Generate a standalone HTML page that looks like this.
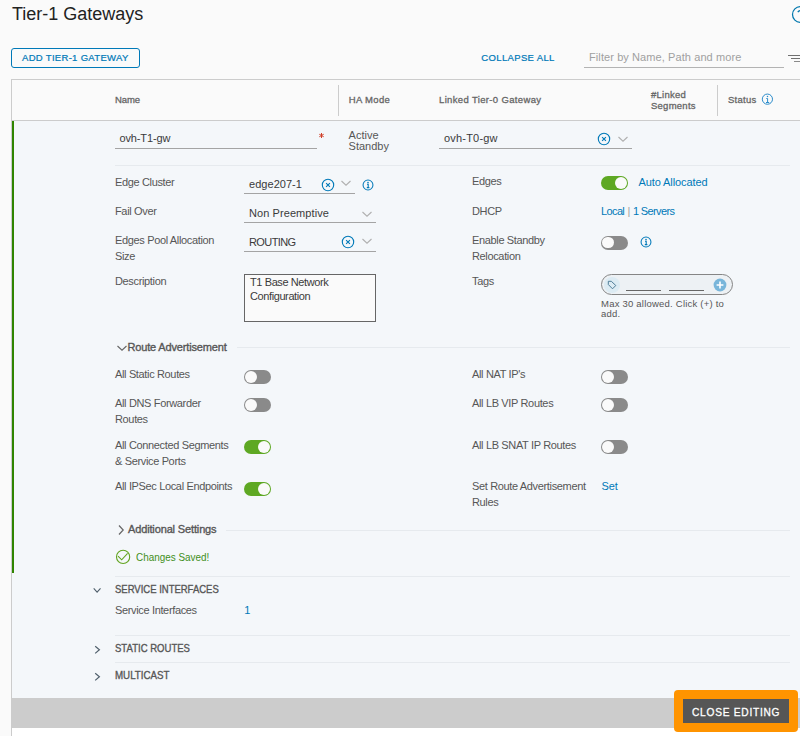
<!DOCTYPE html>
<html><head><meta charset="utf-8"><style>
html,body{margin:0;padding:0;}
body{width:800px;height:736px;overflow:hidden;position:relative;background:#fafafa;font-family:"Liberation Sans",sans-serif;}
.t{position:absolute;white-space:nowrap;}
.r{position:absolute;}
</style></head><body>
<div class="t" style="left:12px;top:4.76px;font-size:18px;line-height:18px;color:#222;font-weight:400;letter-spacing:0px;">Tier-1 Gateways</div>
<svg class="r" style="left:790px;top:4px" width="10" height="22" viewBox="0 0 10 22"><circle cx="10.5" cy="10.5" r="8" fill="none" stroke="#0077ad" stroke-width="1.25"/><path d="M7.8 8.2 Q9 6.2 11 6.6" fill="none" stroke="#0077ad" stroke-width="1.3"/></svg>
<div class="r" style="left:11px;top:48px;width:129px;height:20px;border:1px solid #0079b8;border-radius:3px;box-sizing:border-box"></div>
<div class="t" style="left:22px;top:52.66px;font-size:9.5px;line-height:9.5px;color:#0079b8;font-weight:400;letter-spacing:0.31px;-webkit-text-stroke:0.22px #0079b8;">ADD TIER-1 GATEWAY</div>
<div class="t" style="left:481.3px;top:53.16px;font-size:9.5px;line-height:9.5px;color:#0079b8;font-weight:400;letter-spacing:0.35px;-webkit-text-stroke:0.22px #0079b8;">COLLAPSE ALL</div>
<div class="r" style="left:584px;top:67px;width:200px;height:1px;background:#b3b3b3"></div>
<div class="t" style="left:589px;top:52.49px;font-size:11px;line-height:11px;color:#a0a0a0;font-weight:400;letter-spacing:0.09px;">Filter by Name, Path and more</div>
<div class="r" style="left:788px;top:55px;width:12px;height:1px;background:#707070"></div>
<div class="r" style="left:791px;top:58px;width:9px;height:1px;background:#707070"></div>
<div class="r" style="left:793.5px;top:61px;width:6px;height:1px;background:#8a8a8a"></div>
<div class="r" style="left:11px;top:79px;width:800px;height:660px;border:1px solid #cccccc;box-sizing:border-box;background:#fafafa"></div>
<div class="r" style="left:12px;top:120px;width:788px;height:1px;background:#cccccc"></div>
<div class="r" style="left:338px;top:85px;width:1px;height:31px;background:#cccccc"></div>
<div class="r" style="left:717px;top:85px;width:1px;height:31px;background:#cccccc"></div>
<div class="t" style="left:115px;top:95.36px;font-size:9.5px;line-height:9.5px;color:#666666;font-weight:400;letter-spacing:-0.1px;-webkit-text-stroke:0.3px #666666;">Name</div>
<div class="t" style="left:348.7px;top:95.36px;font-size:9.5px;line-height:9.5px;color:#666666;font-weight:400;letter-spacing:0.35px;-webkit-text-stroke:0.3px #666666;">HA Mode</div>
<div class="t" style="left:439px;top:95.36px;font-size:9.5px;line-height:9.5px;color:#666666;font-weight:400;letter-spacing:0.35px;-webkit-text-stroke:0.3px #666666;">Linked Tier-0 Gateway</div>
<div class="t" style="left:651px;top:88.61px;font-size:9.5px;line-height:11px;color:#666666;font-weight:400;letter-spacing:0.25px;-webkit-text-stroke:0.3px #666666;">#Linked<br>Segments</div>
<div class="t" style="left:728px;top:95.36px;font-size:9.5px;line-height:9.5px;color:#666666;font-weight:400;letter-spacing:0.25px;-webkit-text-stroke:0.3px #666666;">Status</div>
<svg class="r" style="left:761px;top:93px" width="13" height="13" viewBox="0 0 13 13"><circle cx="6.4" cy="6.15" r="5.1" fill="none" stroke="#2b8ccb" stroke-width="1"/><circle cx="6.5" cy="3.5" r="0.75" fill="#2b8ccb"/><path d="M5.3 5.5H6.6V9.5M5 9.5H8.2" fill="none" stroke="#2b8ccb" stroke-width="1"/></svg>
<div class="r" style="left:12px;top:121px;width:788px;height:577px;background:#f4f7fa"></div>
<div class="r" style="left:12px;top:121px;width:2px;height:452px;background:#2f8400"></div>
<div class="t" style="left:119.5px;top:133.29px;font-size:11px;line-height:11px;color:#3a3a3a;font-weight:400;letter-spacing:-0.14px;">ovh-T1-gw</div>
<div class="r" style="left:115px;top:148px;width:202px;height:1px;background:#a4a4a4"></div>
<svg class="r" style="left:316px;top:130px" width="11" height="11" viewBox="0 0 11 11"><path d="M5.5 3V8M3.3 4.25L7.7 6.75M3.3 6.75L7.7 4.25" stroke="#d0402a" stroke-width="1"/></svg>
<div class="t" style="left:348.6px;top:129.69px;font-size:11px;line-height:11px;color:#565656;font-weight:400;letter-spacing:0px;">Active<br>Standby</div>
<div class="t" style="left:444px;top:133.29px;font-size:11px;line-height:11px;color:#3a3a3a;font-weight:400;letter-spacing:0.2px;">ovh-T0-gw</div>
<div class="r" style="left:439px;top:148px;width:193px;height:1px;background:#a4a4a4"></div>
<div class="r" style="left:115px;top:165px;width:675px;height:1px;background:#e6eaee"></div>
<svg class="r" style="left:597.45px;top:132.35px" width="14" height="14" viewBox="0 0 14 14"><circle cx="7" cy="7" r="5.7" fill="none" stroke="#0079b8" stroke-width="1.1"/><path d="M5.1 5.1L8.9 8.9M8.9 5.1L5.1 8.9" stroke="#0079b8" stroke-width="1.1"/></svg>
<svg class="r" style="left:616.6px;top:135px" width="12" height="8" viewBox="0 0 12 8"><path d="M1.5 2 L6 6.2 L10.5 2" fill="none" stroke="#b0b0b0" stroke-width="1.1"/></svg>
<div class="t" style="left:115px;top:176.69px;font-size:11px;line-height:11px;color:#565656;font-weight:400;letter-spacing:-0.35px;">Edge Cluster</div>
<div class="t" style="left:115px;top:205.69px;font-size:11px;line-height:11px;color:#565656;font-weight:400;letter-spacing:-0.35px;">Fail Over</div>
<div class="t" style="left:115px;top:232.49px;font-size:11px;line-height:16px;color:#565656;font-weight:400;letter-spacing:-0.35px;">Edges Pool Allocation<br>Size</div>
<div class="t" style="left:115px;top:275.69px;font-size:11px;line-height:11px;color:#565656;font-weight:400;letter-spacing:-0.35px;">Description</div>
<div class="t" style="left:249px;top:179.19px;font-size:11px;line-height:11px;color:#3a3a3a;font-weight:400;letter-spacing:0.04px;">edge207-1</div>
<div class="r" style="left:244px;top:193px;width:111px;height:1px;background:#a4a4a4"></div>
<svg class="r" style="left:321px;top:177.5px" width="14" height="14" viewBox="0 0 14 14"><circle cx="7" cy="7" r="5.7" fill="none" stroke="#0079b8" stroke-width="1.1"/><path d="M5.1 5.1L8.9 8.9M8.9 5.1L5.1 8.9" stroke="#0079b8" stroke-width="1.1"/></svg>
<svg class="r" style="left:339.7px;top:179.4px" width="12" height="8" viewBox="0 0 12 8"><path d="M1.5 2 L6 6.2 L10.5 2" fill="none" stroke="#b0b0b0" stroke-width="1.1"/></svg>
<svg class="r" style="left:360.7px;top:177.5px" width="14" height="14" viewBox="0 0 14 14"><circle cx="7" cy="7" r="4.95" fill="none" stroke="#0079b8" stroke-width="1.05"/><circle cx="7" cy="4.6" r="0.8" fill="#0079b8"/><path d="M6 6.3H7.2V9.6M5.8 9.6H8.4" fill="none" stroke="#0079b8" stroke-width="1.1"/></svg>
<div class="t" style="left:249px;top:208.19px;font-size:11px;line-height:11px;color:#3a3a3a;font-weight:400;letter-spacing:0.08px;">Non Preemptive</div>
<div class="r" style="left:244px;top:222px;width:132px;height:1px;background:#a4a4a4"></div>
<svg class="r" style="left:361px;top:209.6px" width="12" height="8" viewBox="0 0 12 8"><path d="M1.5 2 L6 6.2 L10.5 2" fill="none" stroke="#b0b0b0" stroke-width="1.1"/></svg>
<div class="t" style="left:249px;top:236.89px;font-size:11px;line-height:11px;color:#3a3a3a;font-weight:400;letter-spacing:-0.6px;">ROUTING</div>
<div class="r" style="left:244px;top:251px;width:132px;height:1px;background:#a4a4a4"></div>
<svg class="r" style="left:341.4px;top:235.4px" width="14" height="14" viewBox="0 0 14 14"><circle cx="7" cy="7" r="5.7" fill="none" stroke="#0079b8" stroke-width="1.1"/><path d="M5.1 5.1L8.9 8.9M8.9 5.1L5.1 8.9" stroke="#0079b8" stroke-width="1.1"/></svg>
<svg class="r" style="left:361px;top:237px" width="12" height="8" viewBox="0 0 12 8"><path d="M1.5 2 L6 6.2 L10.5 2" fill="none" stroke="#b0b0b0" stroke-width="1.1"/></svg>
<div class="r" style="left:244px;top:274px;width:132px;height:48px;border:1px solid #666;box-sizing:border-box;background:#fafafa"></div>
<div class="t" style="left:250px;top:274.99px;font-size:11px;line-height:14px;color:#3a3a3a;font-weight:400;letter-spacing:-0.4px;">T1 Base Network<br>Configuration</div>
<div class="t" style="left:472px;top:176.19px;font-size:11px;line-height:11px;color:#565656;font-weight:400;letter-spacing:-0.35px;">Edges</div>
<div class="r" style="left:601px;top:176px;width:27px;height:14px;background:#5ea823;border-radius:7px"></div>
<div class="r" style="left:615.25px;top:177.25px;width:11.5px;height:11.5px;background:#fafafa;border-radius:6px"></div>
<div class="t" style="left:638.5px;top:177.19px;font-size:11px;line-height:11px;color:#0079b8;font-weight:400;letter-spacing:-0.1px;">Auto Allocated</div>
<div class="t" style="left:472px;top:205.94px;font-size:11px;line-height:11px;color:#565656;font-weight:400;letter-spacing:-0.35px;">DHCP</div>
<div class="t" style="left:601px;top:206.19px;font-size:11px;line-height:11px;color:#0079b8;font-weight:400;letter-spacing:-0.62px;">Local<span style="color:#a0a0a0;margin:0 0.8px"> | </span>1 Servers</div>
<div class="t" style="left:472px;top:232.49px;font-size:11px;line-height:16px;color:#565656;font-weight:400;letter-spacing:-0.35px;">Enable Standby<br>Relocation</div>
<div class="r" style="left:601px;top:235.5px;width:27px;height:14px;background:#8a8a8a;border-radius:7px"></div>
<div class="r" style="left:602.25px;top:236.75px;width:11.5px;height:11.5px;background:#fafafa;border-radius:6px"></div>
<svg class="r" style="left:638.5px;top:235px" width="14" height="14" viewBox="0 0 14 14"><circle cx="7" cy="7" r="4.95" fill="none" stroke="#0079b8" stroke-width="1.05"/><circle cx="7" cy="4.6" r="0.8" fill="#0079b8"/><path d="M6 6.3H7.2V9.6M5.8 9.6H8.4" fill="none" stroke="#0079b8" stroke-width="1.1"/></svg>
<div class="t" style="left:472px;top:275.99px;font-size:11px;line-height:11px;color:#565656;font-weight:400;letter-spacing:-0.35px;">Tags</div>
<div class="r" style="left:601px;top:274px;width:132px;height:21px;border:1px solid #858585;border-radius:10.5px;box-sizing:border-box;background:#edf1f4"></div>
<svg class="r" style="left:604px;top:277px" width="16" height="16" viewBox="0 0 16 16"><circle cx="8" cy="8" r="8" fill="#dcebf3"/><path d="M4.3 4.3 L7.3 4.3 L11.8 8.5 L8.5 11.8 L4.3 7.5 Z" fill="none" stroke="#4f7d98" stroke-width="1"/></svg>
<div class="r" style="left:626px;top:290px;width:35px;height:1px;background:#666"></div>
<div class="r" style="left:669px;top:290px;width:35px;height:1px;background:#666"></div>
<svg class="r" style="left:713px;top:278px" width="14" height="14" viewBox="0 0 14 14"><circle cx="7" cy="7" r="6.4" fill="#79b6da"/><path d="M7 3.6V10.4M3.6 7H10.4" stroke="#fff" stroke-width="1.6"/></svg>
<div class="t" style="left:601px;top:299.21px;font-size:9.5px;line-height:10px;color:#565656;font-weight:400;letter-spacing:0.22px;">Max 30 allowed. Click (+) to<br>add.</div>
<svg class="r" style="left:116px;top:344px" width="12" height="8" viewBox="0 0 12 8"><path d="M1.5 2 L6 6.2 L10.5 2" fill="none" stroke="#666" stroke-width="1.1"/></svg>
<div class="t" style="left:127.5px;top:341.69px;font-size:11px;line-height:11px;color:#565656;font-weight:400;letter-spacing:-0.16px;-webkit-text-stroke:0.35px #565656;">Route Advertisement</div>
<div class="r" style="left:237px;top:347px;width:553px;height:1px;background:#e6eaee"></div>
<div class="t" style="left:115px;top:368.69px;font-size:11px;line-height:11px;color:#565656;font-weight:400;letter-spacing:-0.35px;">All Static Routes</div>
<div class="r" style="left:244px;top:370px;width:27px;height:14px;background:#8a8a8a;border-radius:7px"></div>
<div class="r" style="left:245.25px;top:371.25px;width:11.5px;height:11.5px;background:#fafafa;border-radius:6px"></div>
<div class="t" style="left:115px;top:395.81px;font-size:11px;line-height:15.75px;color:#565656;font-weight:400;letter-spacing:-0.35px;">All DNS Forwarder<br>Routes</div>
<div class="r" style="left:244px;top:398px;width:27px;height:14px;background:#8a8a8a;border-radius:7px"></div>
<div class="r" style="left:245.25px;top:399.25px;width:11.5px;height:11.5px;background:#fafafa;border-radius:6px"></div>
<div class="t" style="left:115px;top:436.79px;font-size:11px;line-height:16px;color:#565656;font-weight:400;letter-spacing:-0.35px;">All Connected Segments<br>&amp; Service Ports</div>
<div class="r" style="left:244px;top:440px;width:27px;height:14px;background:#5ea823;border-radius:7px"></div>
<div class="r" style="left:258.25px;top:441.25px;width:11.5px;height:11.5px;background:#fafafa;border-radius:6px"></div>
<div class="t" style="left:115px;top:481.19px;font-size:11px;line-height:11px;color:#565656;font-weight:400;letter-spacing:-0.35px;">All IPSec Local Endpoints</div>
<div class="r" style="left:244px;top:482px;width:27px;height:14px;background:#5ea823;border-radius:7px"></div>
<div class="r" style="left:258.25px;top:483.25px;width:11.5px;height:11.5px;background:#fafafa;border-radius:6px"></div>
<div class="t" style="left:472px;top:369.19px;font-size:11px;line-height:11px;color:#565656;font-weight:400;letter-spacing:-0.35px;">All NAT IP's</div>
<div class="r" style="left:601px;top:370px;width:27px;height:14px;background:#8a8a8a;border-radius:7px"></div>
<div class="r" style="left:602.25px;top:371.25px;width:11.5px;height:11.5px;background:#fafafa;border-radius:6px"></div>
<div class="t" style="left:472px;top:398.19px;font-size:11px;line-height:11px;color:#565656;font-weight:400;letter-spacing:-0.35px;">All LB VIP Routes</div>
<div class="r" style="left:601px;top:398px;width:27px;height:14px;background:#8a8a8a;border-radius:7px"></div>
<div class="r" style="left:602.25px;top:399.25px;width:11.5px;height:11.5px;background:#fafafa;border-radius:6px"></div>
<div class="t" style="left:472px;top:439.69px;font-size:11px;line-height:11px;color:#565656;font-weight:400;letter-spacing:-0.35px;">All LB SNAT IP Routes</div>
<div class="r" style="left:601px;top:440px;width:27px;height:14px;background:#8a8a8a;border-radius:7px"></div>
<div class="r" style="left:602.25px;top:441.25px;width:11.5px;height:11.5px;background:#fafafa;border-radius:6px"></div>
<div class="t" style="left:472px;top:478.19px;font-size:11px;line-height:16px;color:#565656;font-weight:400;letter-spacing:-0.35px;">Set Route Advertisement<br>Rules</div>
<div class="t" style="left:601.5px;top:480.69px;font-size:11px;line-height:11px;color:#0079b8;font-weight:400;letter-spacing:-0.1px;">Set</div>
<svg class="r" style="left:117px;top:524px" width="8" height="12" viewBox="0 0 8 12"><path d="M2 1.5 L6.2 6 L2 10.5" fill="none" stroke="#666" stroke-width="1.2"/></svg>
<div class="t" style="left:128px;top:524.19px;font-size:11px;line-height:11px;color:#565656;font-weight:400;letter-spacing:-0.14px;-webkit-text-stroke:0.35px #565656;">Additional Settings</div>
<div class="r" style="left:226px;top:530px;width:564px;height:1px;background:#e6eaee"></div>
<svg class="r" style="left:115px;top:549px" width="16" height="16" viewBox="0 0 16 16"><circle cx="8.1" cy="7.9" r="6.6" fill="none" stroke="#62a420" stroke-width="1.1"/><path d="M3 7.2 L6.7 10.8 L12.6 4.4" fill="none" stroke="#62a420" stroke-width="1.1"/></svg>
<div class="t" style="left:135.75px;top:552.19px;font-size:11px;line-height:11px;color:#3f8f1a;font-weight:400;letter-spacing:0px;transform:scaleX(0.9);transform-origin:0 0;">Changes Saved!</div>
<div class="r" style="left:115px;top:576px;width:675px;height:1px;background:#e6eaee"></div>
<svg class="r" style="left:85px;top:580px" width="30" height="20" viewBox="0 0 30 20"><path d="M8.7 8.3 L12.1 12.2 L15.5 8.3" fill="none" stroke="#50606c" stroke-width="1.1"/></svg>
<div class="t" style="left:115px;top:584.19px;font-size:11px;line-height:11px;color:#565656;font-weight:400;letter-spacing:0px;-webkit-text-stroke:0.35px #565656;transform:scaleX(0.863);transform-origin:0 0;">SERVICE INTERFACES</div>
<div class="t" style="left:115px;top:605.19px;font-size:11px;line-height:11px;color:#565656;font-weight:400;letter-spacing:-0.35px;">Service Interfaces</div>
<div class="t" style="left:244.25px;top:605.19px;font-size:11px;line-height:11px;color:#0079b8;font-weight:400;letter-spacing:-0.35px;">1</div>
<div class="r" style="left:115px;top:635px;width:675px;height:1px;background:#e6eaee"></div>
<svg class="r" style="left:85px;top:640px" width="30" height="20" viewBox="0 0 30 20"><path d="M10.2 6.2 L14.4 9.8 L10.2 13.4" fill="none" stroke="#50606c" stroke-width="1.2"/></svg>
<div class="t" style="left:115px;top:642.89px;font-size:11px;line-height:11px;color:#565656;font-weight:400;letter-spacing:0px;-webkit-text-stroke:0.35px #565656;transform:scaleX(0.868);transform-origin:0 0;">STATIC ROUTES</div>
<div class="r" style="left:115px;top:662px;width:675px;height:1px;background:#e6eaee"></div>
<svg class="r" style="left:85px;top:667px" width="30" height="20" viewBox="0 0 30 20"><path d="M10.2 6.2 L14.4 9.8 L10.2 13.4" fill="none" stroke="#50606c" stroke-width="1.2"/></svg>
<div class="t" style="left:115px;top:669.69px;font-size:11px;line-height:11px;color:#565656;font-weight:400;letter-spacing:0px;-webkit-text-stroke:0.35px #565656;transform:scaleX(0.886);transform-origin:0 0;">MULTICAST</div>
<div class="r" style="left:12px;top:698px;width:788px;height:30px;background:#cccccc"></div>
<div class="r" style="left:12px;top:728px;width:788px;height:8px;background:#ffffff"></div>
<div class="r" style="left:674px;top:690px;width:124px;height:42px;background:#ff9400;border-radius:4px"></div>
<div class="r" style="left:683px;top:699px;width:106px;height:24px;background:#565656"></div>
<div class="t" style="left:692px;top:707.19px;font-size:11px;line-height:11px;color:#ffffff;font-weight:400;letter-spacing:0.8px;-webkit-text-stroke:0.3px #ffffff;transform:scaleX(0.925);transform-origin:0 0;">CLOSE EDITING</div>
</body></html>
